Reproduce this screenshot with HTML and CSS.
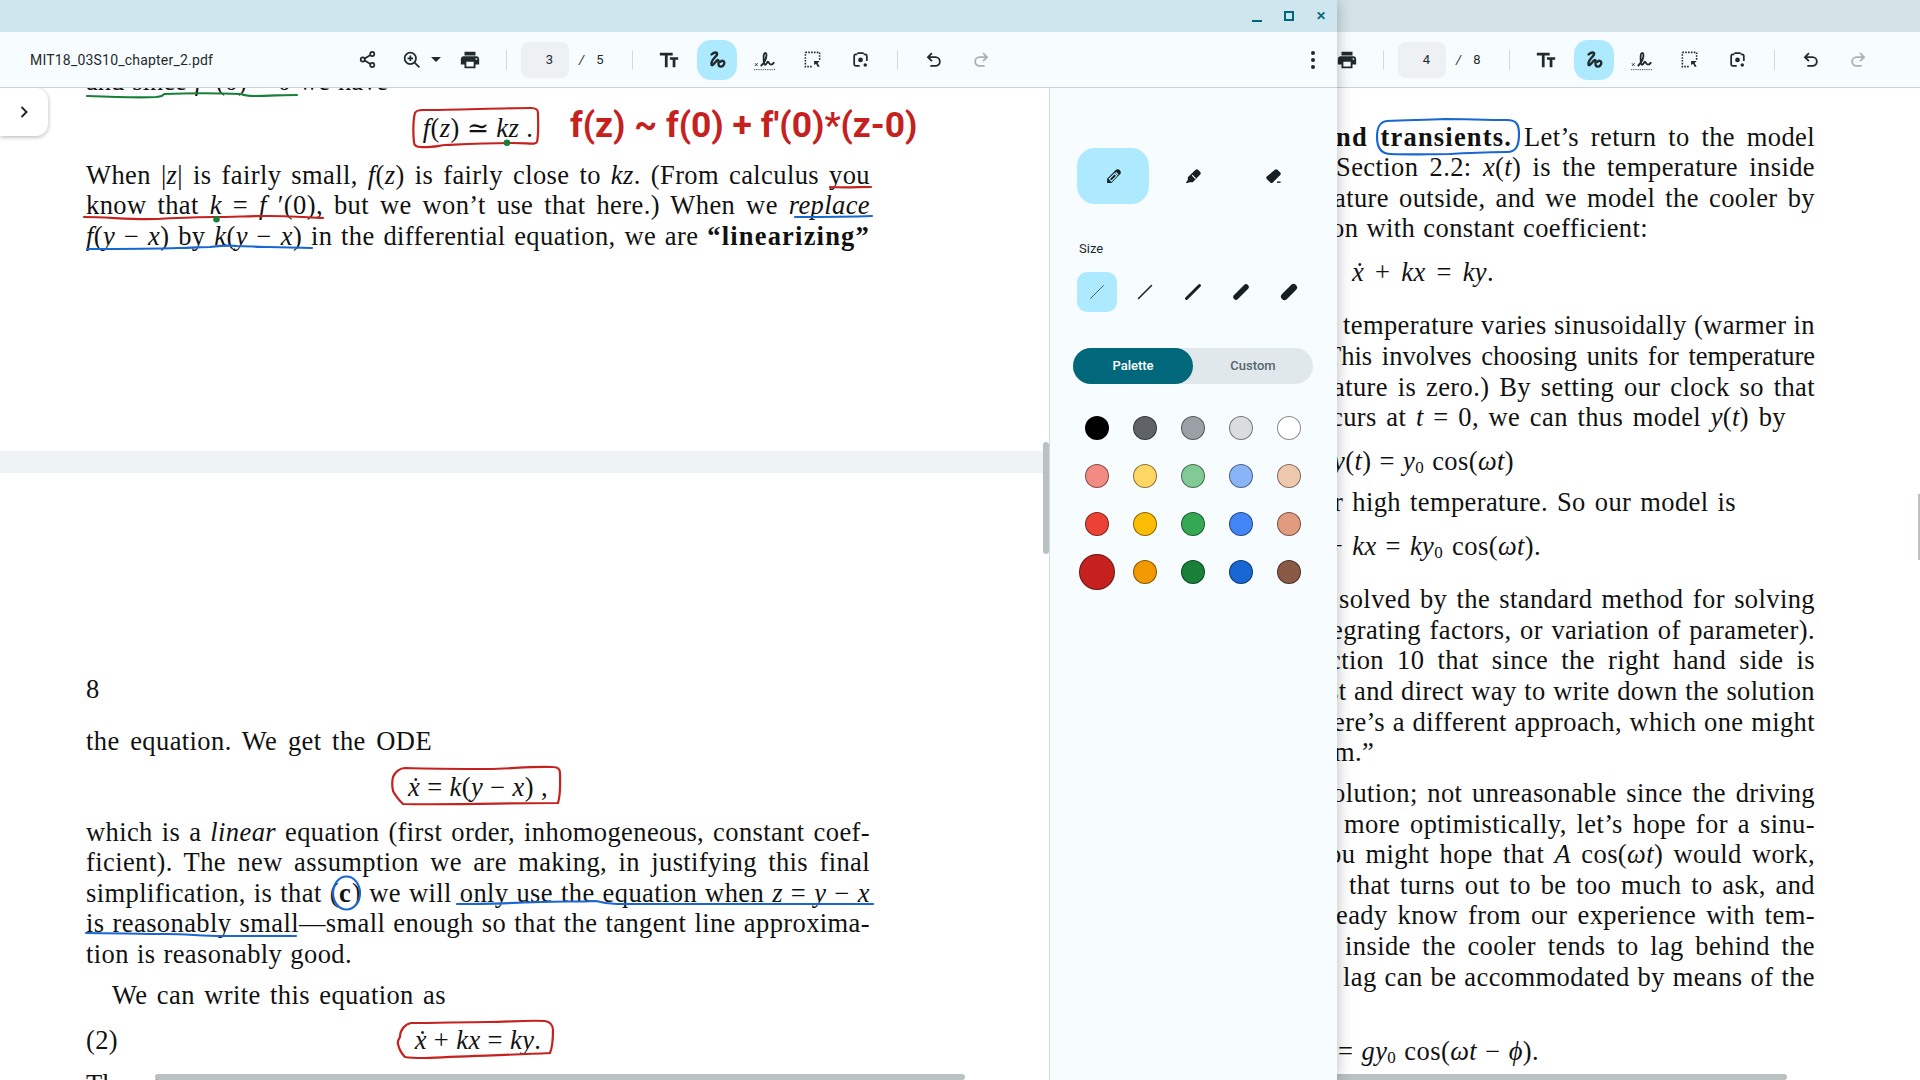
FILE: index.html
```html
<!DOCTYPE html>
<html lang="en">

<head>
    <meta charset="UTF-8">
    <title>MIT18_03S10_chapter_2.pdf</title>
    <link rel="stylesheet" href="styles.css">
</head>

<body>
    <svg class="sprites" aria-hidden="true">
        <symbol id="i-share" viewBox="0 0 24 24">
            <g fill="none" stroke="currentColor" stroke-width="2.2">
                <circle cx="18" cy="5" r="2.6"></circle>
                <circle cx="6" cy="12" r="2.6"></circle>
                <circle cx="18" cy="19" r="2.6"></circle>
                <path d="M8.4 10.7 15.7 6.4M8.4 13.3l7.3 4.3"></path>
            </g>
        </symbol>
        <symbol id="i-zoom" viewBox="0 0 24 24">
            <g fill="none" stroke="currentColor" stroke-width="2.2">
                <circle cx="10.5" cy="10.5" r="7.2"></circle>
                <path d="m16 16 6 6M10.5 7v7M7 10.5h7"></path>
            </g>
        </symbol>
        <symbol id="i-print" viewBox="0 0 24 24">
            <path fill="currentColor" d="M19 8H5c-1.66 0-3 1.34-3 3v6h4v4h12v-4h4v-6c0-1.66-1.34-3-3-3zm-3 11H8v-5h8v5zm3-7c-.55 0-1-.45-1-1s.45-1 1-1 1 .45 1 1-.45 1-1 1zm-1-9H6v4h12V3z"></path>
        </symbol>
        <symbol id="i-text" viewBox="0 0 24 24">
            <path fill="currentColor" d="M2 4v3h5.5v13h3V7H16V4H2zm20 5h-9v2.6h3V20h3v-8.400h3V9z"></path>
        </symbol>
        <symbol id="i-draw" viewBox="0 0 24 24">
            <path fill="none" stroke="currentColor" stroke-width="2.600" stroke-linecap="round" stroke-linejoin="round" d="M6 6c3-3 7-3 6 0s-7 6-6 11c1 3 5-5 7-5s-1 6 2 7 5-2 5-4-3-3-4-1"></path>
        </symbol>
        <symbol id="i-sign" viewBox="0 0 24 24">
            <g fill="none" stroke="currentColor">
                <path stroke-width="1" d="m1 15.500 3 3M4 15.500l-3 3"></path>
                <path stroke-width="2" stroke-linecap="round" d="M8 18c3-3 6-8 5.500-12-.3-3-3-2-3 2 0 5 0 10 2 9s2-4 3-3 1 3 3 3 2.500-1 3-2"></path>
                <path stroke-width="1" stroke-dasharray="1 1" d="M0 22.500h24"></path>
            </g>
        </symbol>
        <symbol id="i-select" viewBox="0 0 24 24">
            <path fill="none" stroke="currentColor" stroke-width="2" stroke-dasharray="2 1.600" d="M3 3h18v10M11 21H3V3"></path>
            <path fill="currentColor" d="M14 14h7l-2.500 2.500 2.500 4.500h-2.500l-2-3.500L14 19z"></path>
        </symbol>
        <symbol id="i-lens" viewBox="0 0 24 24">
            <path fill="none" stroke="currentColor" stroke-width="2.200" d="M8 5.500H6a2 2 0 0 0-2 2V18a2 2 0 0 0 2 2h5M16 5.500h2a2 2 0 0 1 2 2V14M8 4h8"></path>
            <circle cx="12" cy="12.500" r="3" fill="currentColor"></circle>
            <circle cx="18" cy="19" r="2.200" fill="currentColor"></circle>
        </symbol>
        <symbol id="i-undo" viewBox="0 0 24 24">
            <path fill="none" stroke="currentColor" stroke-width="2.300" d="M10 4 5 9l5 5M5 9h9.500a5.500 5.500 0 0 1 0 11H8"></path>
        </symbol>
        <symbol id="i-redo" viewBox="0 0 24 24">
            <path fill="none" stroke="currentColor" stroke-width="2.300" d="m14 4 5 5-5 5M19 9H9.500a5.500 5.500 0 0 0 0 11H16"></path>
        </symbol>
    </svg>

    <!-- window behind, only its right part shows -->
    <section class="window window-back">
        <div class="titlebar"></div>
        <div class="toolbar toolbar-back">
            <button class="tool"><svg class="icon"><use href="#i-print"></use></svg></button>
            <span class="sep"></span>
            <span class="page-box">4</span>
            <span class="page-of">/</span>
            <span class="page-count">8</span>
            <span class="sep sep-b"></span>
            <button class="tool"><svg class="icon"><use href="#i-text"></use></svg></button>
            <button class="tool tool-on"><svg class="icon"><use href="#i-draw"></use></svg></button>
            <button class="tool"><svg class="icon"><use href="#i-sign"></use></svg></button>
            <button class="tool"><svg class="icon small"><use href="#i-select"></use></svg></button>
            <button class="tool"><svg class="icon small"><use href="#i-lens"></use></svg></button>
            <span class="sep sep-c"></span>
            <button class="tool"><svg class="icon small"><use href="#i-undo"></use></svg></button>
            <button class="tool tool-off"><svg class="icon small"><use href="#i-redo"></use></svg></button>
        </div>
        <div class="doc doc-back">
            <div class="ln b1"><b>nd transients.</b> Let’s return to the model</div>
            <div class="ln b2">Section 2.2: <i>x</i>(<i>t</i>) is the temperature inside</div>
            <div class="ln b3">ature outside, and we model the cooler by</div>
            <div class="ln b4">on with constant coefficient:</div>
            <div class="ln b5 gap-eq"><i>ẋ</i> + <i>kx</i> = <i>ky</i>.</div>
            <div class="ln b6 gap-par">temperature varies sinusoidally (warmer in</div>
            <div class="ln b7">This involves choosing units for temperature</div>
            <div class="ln b8">ature is zero.) By setting our clock so that</div>
            <div class="ln b9">curs at <i>t</i> = 0, we can thus model <i>y</i>(<i>t</i>) by</div>
            <div class="ln b10 gap-eq"><i>y</i>(<i>t</i>) = <i>y</i><sub>0</sub> cos(<i>ωt</i>)</div>
            <div class="ln b11 gap-line">r high temperature. So our model is</div>
            <div class="ln b12 gap-eq">+ <i>kx</i> = <i>ky</i><sub>0</sub> cos(<i>ωt</i>).</div>
            <div class="ln b13 gap-par">solved by the standard method for solving</div>
            <div class="ln b14">egrating factors, or variation of parameter).</div>
            <div class="ln b15">ction 10 that since the right hand side is</div>
            <div class="ln b16">st and direct way to write down the solution</div>
            <div class="ln b17">ere’s a different approach, which one might</div>
            <div class="ln b18">m.”</div>
            <div class="ln b19 gap-line">olution; not unreasonable since the driving</div>
            <div class="ln b20">more optimistically, let’s hope for a sinu-</div>
            <div class="ln b21">ou might hope that <i>A</i> cos(<i>ωt</i>) would work,</div>
            <div class="ln b22">that turns out to be too much to ask, and</div>
            <div class="ln b23">eady know from our experience with tem-</div>
            <div class="ln b24">inside the cooler tends to lag behind the</div>
            <div class="ln b25">lag can be accommodated by means of the</div>
            <div class="ln b26 gap-last">= <i>gy</i><sub>0</sub> cos(<i>ωt</i> − <i>ϕ</i>).</div>
            <svg class="ink" viewBox="1320 88 600 992">
                <path class="ink-blue" d="M1377 137c0-9 2-15 10-16 20-1 38-1 58-2 20 0 40 1 62 1 9 0 12 4 12 14 0 12-3 18-12 18-20 0-38 1-58 2-20 0-38 1-58 0-10 0-14-7-14-17z"></path>
            </svg>
            <span class="hbar hbar-back"></span>
            <span class="vbar-back"></span>
        </div>
    </section>

    <section class="window window-front">
        <div class="titlebar">
            <button class="win-btn"><span class="win-min"></span></button>
            <button class="win-btn"><span class="win-max"></span></button>
            <button class="win-btn win-close">✕</button>
        </div>
        <div class="toolbar">
            <span class="file-name">MIT18_03S10_chapter_2.pdf</span>
            <button class="tool tool-share"><svg class="icon small"><use href="#i-share"></use></svg></button>
            <button class="tool tool-zoom"><svg class="icon small"><use href="#i-zoom"></use></svg></button>
            <span class="caret"></span>
            <button class="tool tool-print"><svg class="icon"><use href="#i-print"></use></svg></button>
            <span class="sep"></span>
            <span class="page-box">3</span>
            <span class="page-of">/</span>
            <span class="page-count">5</span>
            <span class="sep sep-b"></span>
            <button class="tool"><svg class="icon"><use href="#i-text"></use></svg></button>
            <button class="tool tool-on"><svg class="icon"><use href="#i-draw"></use></svg></button>
            <button class="tool"><svg class="icon"><use href="#i-sign"></use></svg></button>
            <button class="tool"><svg class="icon small"><use href="#i-select"></use></svg></button>
            <button class="tool"><svg class="icon small"><use href="#i-lens"></use></svg></button>
            <span class="sep sep-c"></span>
            <button class="tool"><svg class="icon small"><use href="#i-undo"></use></svg></button>
            <button class="tool tool-off"><svg class="icon small"><use href="#i-redo"></use></svg></button>
            <span class="kebab"><i></i><i></i><i></i></span>
        </div>
        <div class="body">
            <div class="doc doc-front">
                <div class="pdf-page page-a">
                    <div class="ln first-ln">and since <i>f</i> ′(0) = 0 we have</div>
                    <div class="ln eq gap-a"><i>f</i>(<i>z</i>) ≃ <i>kz</i> .</div>
                    <div class="ln fit gap-a">When |<i>z</i>| is fairly small, <i>f</i>(<i>z</i>) is fairly close to <i>kz</i>. (From calculus you</div>
                    <div class="ln fit">know that <i>k</i> = <i>f</i> ′(0), but we won’t use that here.) When we <i>replace</i></div>
                    <div class="ln fit"><i>f</i>(<i>y</i> − <i>x</i>) by <i>k</i>(<i>y</i> − <i>x</i>) in the differential equation, we are <b>“linearizing”</b></div>
                </div>
                <div class="page-gap"></div>
                <div class="pdf-page page-b">
                    <div class="ln">8</div>
                    <div class="ln n-ode">the equation. We get the ODE</div>
                    <div class="ln eq gap-b"><i>ẋ</i> = <i>k</i>(<i>y</i> − <i>x</i>) ,</div>
                    <div class="ln fit gap-c">which is a <i>linear</i> equation (first order, inhomogeneous, constant coef-</div>
                    <div class="ln fit">ficient). The new assumption we are making, in justifying this final</div>
                    <div class="ln fit">simplification, is that (<b>c</b>) we will only use the equation when <i>z</i> = <i>y</i> − <i>x</i></div>
                    <div class="ln fit">is reasonably small—small enough so that the tangent line approxima-</div>
                    <div class="ln n-tion">tion is reasonably good.</div>
                    <div class="ln n-write">We can write this equation as</div>
                    <div class="ln eq-row gap-c"><span>(2)</span><span><i>ẋ</i> + <i>kx</i> = <i>ky</i>.</span></div>
                    <div class="ln fit gap-d">The steps are the same as in our suggested method of finding a solution</div>
                </div>
                <svg class="ink" viewBox="0 88 1049 992">
                    <path class="ink-green" d="M87 96c25 1 50 2 69 1 9-1 5-2 9-3 25-1 50-1 76 0 5 2 8 2 13 2 15 0 30-1 43-1"></path>
                    <path class="ink-red" d="M415 113c1-2 4-3 8-3 35 0 75-2 108-2 5 0 7 1 7 5 0 9 1 20-1 29-1 3-8 1-25 1-25 0-45 1-67 2-8 1-18 3-24 2-5 0-7-2-7-5-1-8-1-22 1-29z"></path>
                    <circle class="dot-green" cx="507" cy="142.700" r="3.300"></circle>
                    <path class="ink-red" d="M830 187c14 1 28 0 41 0M84 217c24 0 48 3 72 2 20-1 38-2 58-2 18 0 36-1 54-1 18 0 36 1 55 2"></path>
                    <circle class="dot-green" cx="216.500" cy="219.300" r="3.300"></circle>
                    <path class="ink-blue" d="M795 217c25 0 51 0 77-1M87 249c30 0 62 0 92-1 12 0 22-1 31-1 9-1 18-2 27-1 10 0 21 1 31 1l44 1"></path>
                    <path class="ink-red" d="M393 777c2-5 7-9 12-9 30 1 55 1 84 1 20 0 42-3 64-2 4 0 7 2 7 6 0 10 1 20-2 30-50 0-105 2-155 1-4-4-8-9-10-13-1-5-1-10 0-14z"></path>
                    <ellipse class="ink-blue" cx="346.500" cy="893" rx="13.500" ry="16.500"></ellipse>
                    <path class="ink-blue" d="M457 904c28 0 57-1 85-2 18-1 36 0 54-1 7 2 14 3 21 3l256 0M86 933c27 0 54 1 81 1 18 0 36 2 54 2h75"></path>
                    <path class="ink-red" d="M400 1037c0-7 5-13 11-14 26 0 52-1 78-1 19 0 38-2 56-1 5 1 8 4 8 9 0 8 0 16-3 23-40 2-85 3-126 5-7 0-13 0-19-1-4-4-6-8-7-13-1-3 1-5 2-7z"></path>
                </svg>
                <span class="note">f(z) ~ f(0) + f'(0)*(z-0)</span>
                <button class="side-open">
                    <svg class="chevron" viewBox="0 0 10 14"><path d="m2.500 2 5 5-5 5"></path></svg>
                </button>
                <span class="vbar"></span>
                <span class="hbar"></span>
            </div>
            <aside class="panel">
                <div class="pen-row">
                    <button class="pen pen-on">
                        <svg class="pen-icon" viewBox="0 0 24 24">
                            <path class="solid" d="M15.500 2.500c1.500-1.500 4-1 5.500.5s2 4 .5 5.500L9 21H3v-6z"></path>
                            <path class="cut" d="m15 6 3.500 3.500M6 15.500 13.500 8l3 3L9 18.500z"></path>
                        </svg>
                    </button>
                    <button class="pen">
                        <svg class="pen-icon" viewBox="0 0 24 24">
                            <path class="solid" d="M15 2.500c1-1 2.500-1 3.500 0l3 3c1 1 1 2.500 0 3.500L13 18l-2 2H6l-2 1H1l3-4v-4l1-1z"></path>
                            <path class="cut" d="m10 10 5 5"></path>
                        </svg>
                    </button>
                    <button class="pen">
                        <svg class="pen-icon" viewBox="0 0 24 24">
                            <path class="solid" d="M14 2.500c1-1 2.500-1 3.500 0l4 4c1 1 1 2.500 0 3.500L11 20.500c-1 1-2.500 1-3.500 0l-5-5c-1-1-1-2.500 0-3.500z"></path>
                            <path class="solid" d="M17 19h5v2h-5z"></path>
                        </svg>
                    </button>
                </div>
                <div class="size-label">Size</div>
                <div class="size-row">
                    <button class="size size-on"><svg viewBox="0 0 20 20"><path class="stroke-1" d="m3.500 16.500 13-13"></path></svg></button>
                    <button class="size"><svg viewBox="0 0 20 20"><path class="stroke-2" d="m3.500 16.500 13-13"></path></svg></button>
                    <button class="size"><svg viewBox="0 0 20 20"><path class="stroke-3" d="m3.500 16.500 13-13"></path></svg></button>
                    <button class="size"><svg viewBox="0 0 20 20"><path class="stroke-4" d="m5 15 10-10"></path></svg></button>
                    <button class="size"><svg viewBox="0 0 20 20"><path class="stroke-5" d="m5.500 14.500 9-9"></path></svg></button>
                </div>
                <div class="toggle">
                    <span class="toggle-on">Palette</span>
                    <span class="toggle-off">Custom</span>
                </div>
                <div class="swatches">
                    <span class="swatch c-black"></span>
                    <span class="swatch c-grey-1"></span>
                    <span class="swatch c-grey-2"></span>
                    <span class="swatch c-grey-3"></span>
                    <span class="swatch c-white"></span>
                    <span class="swatch c-red-1"></span>
                    <span class="swatch c-yellow-1"></span>
                    <span class="swatch c-green-1"></span>
                    <span class="swatch c-blue-1"></span>
                    <span class="swatch c-tan-1"></span>
                    <span class="swatch c-red-2"></span>
                    <span class="swatch c-yellow-2"></span>
                    <span class="swatch c-green-2"></span>
                    <span class="swatch c-blue-2"></span>
                    <span class="swatch c-tan-2"></span>
                    <span class="swatch swatch-on c-red-3"></span>
                    <span class="swatch c-yellow-3"></span>
                    <span class="swatch c-green-3"></span>
                    <span class="swatch c-blue-3"></span>
                    <span class="swatch c-tan-3"></span>
                </div>
            </aside>
        </div>
    </section>
</body>

</html>
```

FILE: styles.css
```css
* {
    box-sizing: border-box;
}

html,
body {
    width: 1920px;
    height: 1080px;
    margin: 0;
    overflow: hidden;
}

body {
    position: relative;
    background: #d5e3e9;
    font-family: Roboto, "Liberation Sans", sans-serif;
    color: #1f2a2e;
}

button {
    padding: 0;
    border: 0;
    background: none;
    color: inherit;
    font: inherit;
}

.sprites {
    position: absolute;
    width: 0;
    height: 0;
}

/* windows on the desktop */
.window {
    position: absolute;
    top: 0;
    height: 1080px;
    display: flex;
    flex-direction: column;
}

.window-back {
    left: 1320px;
    width: 600px;
}

.window-front {
    left: 0;
    width: 1337px;
    box-shadow: 0 0 14px rgba(0, 0, 0, 0.28);
}

.titlebar {
    flex: none;
    height: 32px;
    display: flex;
    justify-content: flex-end;
    background: #d5e3e9;
}

.window-front .titlebar {
    background: #cfe6ee;
}

.win-btn {
    width: 32px;
    height: 32px;
    display: flex;
    align-items: center;
    justify-content: center;
    color: #00687a;
}

.win-min {
    width: 10px;
    height: 2px;
    margin-top: 10px;
    background: #00687a;
}

.win-max {
    width: 10px;
    height: 10px;
    border: 2px solid #00687a;
}

.win-close {
    font-size: 12px;
    font-weight: 700;
}

/* toolbar */
.toolbar {
    flex: none;
    height: 56px;
    display: flex;
    align-items: center;
    padding: 0 0 0 30px;
    background: #f7fcff;
    border-bottom: 1px solid #ccd3d6;
}

.toolbar-back {
    padding-left: 7px;
}

.file-name {
    width: 317px;
    font-size: 14px;
    letter-spacing: 0.2px;
}

.tool {
    flex: none;
    width: 48px;
    height: 40px;
    display: flex;
    align-items: center;
    justify-content: center;
    position: relative;
    z-index: 0;
}

.tool-share {
    width: 40px;
}

.tool-zoom {
    width: 32px;
    margin-left: 8px;
}

.tool-print {
    width: 40px;
    margin-left: 9px;
}

.toolbar-back .tool:first-child {
    width: 40px;
}

.tool-on::before {
    content: "";
    position: absolute;
    z-index: -1;
    top: 0;
    bottom: 0;
    left: 4px;
    right: 4px;
    border-radius: 14px;
    background: #aeeaff;
}

.tool-off {
    color: #abb0b2;
}

.icon {
    width: 22px;
    height: 22px;
}

.icon.small {
    width: 19px;
    height: 19px;
}

.caret {
    flex: none;
    width: 0;
    height: 0;
    margin-left: 4px;
    border-left: 5px solid transparent;
    border-right: 5px solid transparent;
    border-top: 5px solid #1f2a2e;
}

.sep {
    flex: none;
    width: 1px;
    height: 20px;
    margin: 0 14px 0 16px;
    background: #d3d9dc;
}

.sep-b {
    margin: 0 12px 0 28px;
}

.sep-c {
    margin: 0 12px;
}

.page-box {
    flex: none;
    width: 48px;
    height: 36px;
    padding-right: 16px;
    border-radius: 8px;
    background: #edf1f4;
    font-size: 13px;
    line-height: 36px;
    text-align: right;
}

.page-of {
    margin-left: 10px;
    font-size: 13px;
    font-style: italic;
}

.page-count {
    margin-left: 12px;
    font-size: 13px;
}

.kebab {
    margin-left: auto;
    margin-right: 22px;
    display: flex;
    flex-direction: column;
    gap: 3px;
}

.kebab i {
    width: 4px;
    height: 4px;
    border-radius: 50%;
    background: #1f2a2e;
}

/* pdf text */
.doc {
    position: relative;
    overflow: hidden;
    background: #fff;
    color: #111;
    font-family: "Liberation Serif", "DejaVu Serif", serif;
    font-size: 26.5px;
    letter-spacing: 0.4px;
    line-height: 30.6px;
}

.doc-back {
    flex: 1;
    padding-top: 33.7px;
}

.doc-front {
    flex: 1;
    min-width: 0;
    height: 992px;
}

.body {
    flex: 1;
    display: flex;
}

.ln {
    height: 30.6px;
}

.ln sub {
    font-size: 17px;
    line-height: 0;
    vertical-align: -3px;
}

.ln b {
    font-weight: 700;
    letter-spacing: 1.2px;
}

.pdf-page {
    margin-left: 86px;
    width: 784px;
    background: #fff;
}

.page-a {
    height: 385.3px;
    margin-top: -22.3px;
}

.page-gap {
    height: 22px;
    background: #eef3f6;
}

.page-b {
    padding-top: 200.7px;
}

.fit {
    text-align: justify;
    text-align-last: justify;
}

.first-ln {
    width: 302px;
    letter-spacing: 0;
    word-spacing: -1px;
    text-align-last: justify;
}

.eq {
    text-align: center;
}

.eq-row {
    display: grid;
    grid-template-columns: 1fr auto 1fr;
}

.n-ode {
    width: 346px;
    margin-top: 21.4px;
    text-align-last: justify;
}

.n-tion {
    width: 266px;
    text-align-last: justify;
}

.n-write {
    width: 334px;
    margin: 10.4px 0 0 26px;
    text-align-last: justify;
}

.gap-a {
    margin-top: 16.4px;
}

.gap-b {
    margin-top: 15.4px;
}

.gap-c {
    margin-top: 14.4px;
}

.gap-d {
    margin-top: 13.4px;
}

/* back page: line starts and widths, text runs under the front window */
.doc-back .ln {
    text-align: justify;
    text-align-last: justify;
}

.gap-eq {
    margin-top: 13.4px;
}

.gap-par {
    margin-top: 22.4px;
}

.gap-line {
    margin-top: 10.4px;
}

.gap-last {
    margin-top: 43.4px;
}

.b1 { margin-left: 16px; width: 479px; }
.b2 { margin-left: 16px; width: 479px; }
.b3 { margin-left: 14px; width: 481px; }
.b4 { margin-left: 11px; width: 317px; }
.b5 { margin-left: 32px; width: 142px; }
.b6 { margin-left: 23px; width: 472px; }
.b7 { margin-left: 5px; width: 490px; letter-spacing: 0; }
.b8 { margin-left: 13px; width: 482px; }
.b9 { margin-left: 11px; width: 455px; }
.b10 { margin-left: 13px; width: 181px; }
.b11 { margin-left: 14px; width: 402px; }
.b12 { margin-left: 8px; width: 213px; }
.b13 { margin-left: 19px; width: 476px; }
.b14 { margin-left: 11px; width: 484px; }
.b15 { margin-left: 9px; width: 486px; }
.b16 { margin-left: 8px; width: 487px; }
.b17 { margin-left: 13px; width: 482px; }
.b18 { margin-left: 14px; width: 43px; }
.b19 { margin-left: 12px; width: 483px; }
.b20 { margin-left: 24px; width: 471px; }
.b21 { margin-left: 8px; width: 487px; }
.b22 { margin-left: 29px; width: 466px; }
.b23 { margin-left: 16px; width: 479px; }
.b24 { margin-left: 25px; width: 470px; }
.b25 { margin-left: 23px; width: 472px; }
.b26 { margin-left: 18px; width: 201px; }

/* ink on top of the pages */
.ink {
    position: absolute;
    top: 0;
    left: 0;
    width: 100%;
    height: 992px;
    pointer-events: none;
}

.ink path,
.ink ellipse {
    fill: none;
    stroke-width: 2.2;
    stroke-linecap: round;
}

.ink .ink-red {
    stroke: #c5221f;
}

.ink .ink-green {
    stroke: #188038;
}

.ink .ink-blue {
    stroke: #1967d2;
}

.dot-green {
    fill: #188038;
}

.note {
    position: absolute;
    top: 15px;
    left: 570px;
    color: #c5221f;
    font-family: Roboto, "Liberation Sans", sans-serif;
    font-size: 35.4px;
    font-weight: 700;
    letter-spacing: 0;
    line-height: 44px;
    white-space: nowrap;
}

.side-open {
    position: absolute;
    top: 0;
    left: 0;
    width: 48px;
    height: 48px;
    border-radius: 0 12px 12px 0;
    background: #fff;
    box-shadow: 0 1px 4px rgba(0, 0, 0, 0.3);
    display: flex;
    align-items: center;
    justify-content: center;
}

.chevron {
    width: 10px;
    height: 14px;
    fill: none;
    stroke: #1f2a2e;
    stroke-width: 2;
}

.vbar {
    position: absolute;
    top: 354px;
    right: 0;
    width: 6px;
    height: 112px;
    border-radius: 3px;
    background: #b9c1c3;
}

.hbar {
    position: absolute;
    bottom: 0;
    left: 155px;
    width: 810px;
    height: 6px;
    border-radius: 3px;
    background: #b9c1c3;
}

.hbar-back {
    left: 0;
    width: 467px;
}

.vbar-back {
    position: absolute;
    top: 406px;
    right: 0;
    width: 2px;
    height: 66px;
    background: #b9c1c3;
}

/* annotation panel */
.panel {
    flex: none;
    width: 288px;
    padding: 60px 0 0 27px;
    border-left: 1px solid #d3d9dc;
    background: #f7fcff;
}

.pen-row {
    display: flex;
    gap: 8px;
}

.pen {
    width: 72px;
    height: 56px;
    border-radius: 18px;
    display: flex;
    align-items: center;
    justify-content: center;
}

.pen-on {
    background: #aeeaff;
}

.pen-icon {
    width: 17px;
    height: 17px;
}

.pen-icon .solid {
    fill: #162024;
}

.pen-icon .cut {
    fill: none;
    stroke: #f7fcff;
    stroke-width: 1.6;
}

.pen-on .cut {
    stroke: #aeeaff;
}

.size-label {
    margin: 37px 0 15px 2px;
    font-size: 13px;
    line-height: 16px;
}

.size-row {
    display: flex;
    gap: 8px;
}

.size {
    width: 40px;
    height: 40px;
    border-radius: 10px;
    display: flex;
    align-items: center;
    justify-content: center;
}

.size-on {
    background: #aeeaff;
}

.size svg {
    width: 20px;
    height: 20px;
    fill: none;
    stroke: #162024;
    stroke-linecap: round;
}

.stroke-1 {
    stroke: #52646b;
    stroke-width: 1;
}

.stroke-2 {
    stroke-width: 1.5;
}

.stroke-3 {
    stroke-width: 3;
}

.stroke-4 {
    stroke-width: 5.5;
}

.stroke-5 {
    stroke-width: 7;
}

.toggle {
    width: 240px;
    height: 36px;
    margin: 36px 0 0 -4px;
    display: flex;
    border-radius: 18px;
    background: #e1e8eb;
    font-size: 13px;
    font-weight: 500;
    line-height: 36px;
    text-align: center;
}

.toggle-on {
    width: 120px;
    border-radius: 18px;
    background: #00687a;
    color: #fff;
}

.toggle-off {
    width: 120px;
    color: #55656d;
}

.swatches {
    display: grid;
    grid-template-columns: repeat(5, 40px);
    grid-auto-rows: 40px;
    gap: 8px;
    margin-top: 24px;
    place-items: center;
}

.swatch {
    width: 24px;
    height: 24px;
    border-radius: 50%;
    border: 1px solid rgba(0, 0, 0, 0.45);
}

.swatch-on {
    width: 36px;
    height: 36px;
}

.c-black { background: #000; }
.c-grey-1 { background: #5f6368; }
.c-grey-2 { background: #9aa0a6; }
.c-grey-3 { background: #dadce0; }
.c-white { background: #fff; }
.c-red-1 { background: #f28b82; }
.c-yellow-1 { background: #fdd663; }
.c-green-1 { background: #81c995; }
.c-blue-1 { background: #8ab4f8; }
.c-tan-1 { background: #eec9ae; }
.c-red-2 { background: #ea4335; }
.c-yellow-2 { background: #fbbc04; }
.c-green-2 { background: #34a853; }
.c-blue-2 { background: #4285f4; }
.c-tan-2 { background: #e19c80; }
.c-red-3 { background: #c5221f; }
.c-yellow-3 { background: #f29900; }
.c-green-3 { background: #188038; }
.c-blue-3 { background: #1967d2; }
.c-tan-3 { background: #885945; }
```
